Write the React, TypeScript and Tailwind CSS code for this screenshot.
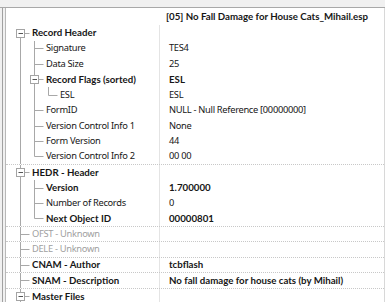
import React from "react";

type Row = {
  label: string;
  value?: string;
  level: number;
  box?: boolean;
  first?: boolean;
  last?: boolean;
  anc: boolean[];
  bold?: boolean;
  vbold?: boolean;
  dim?: boolean;
  sep?: boolean;
};

const rows: Row[] = [
  { label: "Record Header", level: 0, box: true, first: true, anc: [], bold: true },
  { label: "Signature", value: "TES4", level: 1, anc: [true] },
  { label: "Data Size", value: "25", level: 1, anc: [true] },
  { label: "Record Flags (sorted)", value: "ESL", level: 1, box: true, anc: [true], bold: true, vbold: true },
  { label: "ESL", value: "ESL", level: 2, last: true, anc: [true, true] },
  { label: "FormID", value: "NULL - Null Reference [00000000]", level: 1, anc: [true] },
  { label: "Version Control Info 1", value: "None", level: 1, anc: [true] },
  { label: "Form Version", value: "44", level: 1, anc: [true] },
  { label: "Version Control Info 2", value: "00 00", level: 1, last: true, anc: [true], sep: true },
  { label: "HEDR - Header", level: 0, box: true, anc: [], bold: true },
  { label: "Version", value: "1.700000", level: 1, anc: [true], bold: true, vbold: true },
  { label: "Number of Records", value: "0", level: 1, anc: [true] },
  { label: "Next Object ID", value: "00000801", level: 1, last: true, anc: [true], bold: true, vbold: true, sep: true },
  { label: "OFST - Unknown", level: 0, anc: [], dim: true, sep: true },
  { label: "DELE - Unknown", level: 0, anc: [], dim: true, sep: true },
  { label: "CNAM - Author", value: "tcbflash", level: 0, anc: [], bold: true, vbold: true, sep: true },
  { label: "SNAM - Description", value: "No fall damage for house cats (by Mihail)", level: 0, anc: [], bold: true, vbold: true, sep: true },
  { label: "Master Files", level: 0, box: true, anc: [], bold: true },
];

const LINE = "#a8a8a8";

function Guides({ r }: { r: Row }) {
  const lx = (l: number) => 20 + 14 * l - 6 + 0.5;
  const textX = 20 + 14 * r.level + 12;
  const w = textX - 6;
  const mid = 8.5;
  const x = lx(r.level);
  return (
    <svg width={w} height={16} className="shrink-0 overflow-visible" style={{ display: "block" }}>
      {r.anc.map((c, i) => (c ? <line key={i} x1={lx(i)} x2={lx(i)} y1={-1} y2={17} stroke={LINE} strokeWidth={1} /> : null))}
      <line x1={x} x2={x} y1={r.first ? mid : -1} y2={r.last ? mid : 17} stroke={LINE} strokeWidth={1} />
      <line x1={x} x2={x + 9} y1={mid} y2={mid} stroke={LINE} strokeWidth={1} />
      {r.box && (
        <g>
          <rect x={x - 4} y={mid - 4} width={8} height={8} fill="#fff" stroke="#a4a4a4" strokeWidth={1} />
          <line x1={x - 2} x2={x + 2.5} y1={mid} y2={mid} stroke="#555" strokeWidth={1} />
        </g>
      )}
    </svg>
  );
}

const REG = "font-['Noto_Sans',sans-serif] text-[9.3px] tracking-[-0.3px]";
const BOLD = "font-['Lato',sans-serif] font-bold text-[9.7px]";

export default function App() {
  return (
    <div className="w-[385px] h-[302px] overflow-hidden bg-[#f0f0f0] flex flex-col font-['Lato',sans-serif] text-[9px] text-[#161616]">
      <div className="h-[7px] shrink-0" />
      <div className="flex-1 flex min-h-0 border-t border-[#a8a8a8]">
        <div className="w-[2px] shrink-0 bg-[#f0f0f0]" />
        <div className="w-px shrink-0 bg-[#a0a0a0]" />
        <div className="w-[2px] shrink-0 bg-[#f0f0f0]" />
        <div className="w-px shrink-0 bg-[#b8b8b8]" />
        <div className="flex-1 bg-white flex flex-col min-w-0">
          <div className="h-[17px] shrink-0 flex items-center">
            <div className="w-[154px] shrink-0" />
            <div className={`pl-[6px] whitespace-nowrap ${BOLD}`}>[05] No Fall Damage for House Cats_Mihail.esp</div>
          </div>
          {rows.map((r, i) => (
            <div key={i} className={`h-[15.5px] shrink-0 flex ${r.sep ? "border-b border-dotted border-[#c8c8c8]" : ""}`}>
              <div className="w-[154px] shrink-0 flex items-center overflow-hidden border-r border-[#e4e4e4]">
                <Guides r={r} />
                <span className={`whitespace-nowrap ${r.bold ? BOLD : REG} ${r.dim ? "text-[#a0a0a0]" : ""}`}>{r.label}</span>
              </div>
              <div className={`pl-[9px] flex items-center whitespace-nowrap ${r.vbold ? BOLD : REG}`}>{r.value ?? ""}</div>
            </div>
          ))}
        </div>
        <div className="w-px shrink-0 bg-[#d8d8d8]" />
      </div>
    </div>
  );
}
